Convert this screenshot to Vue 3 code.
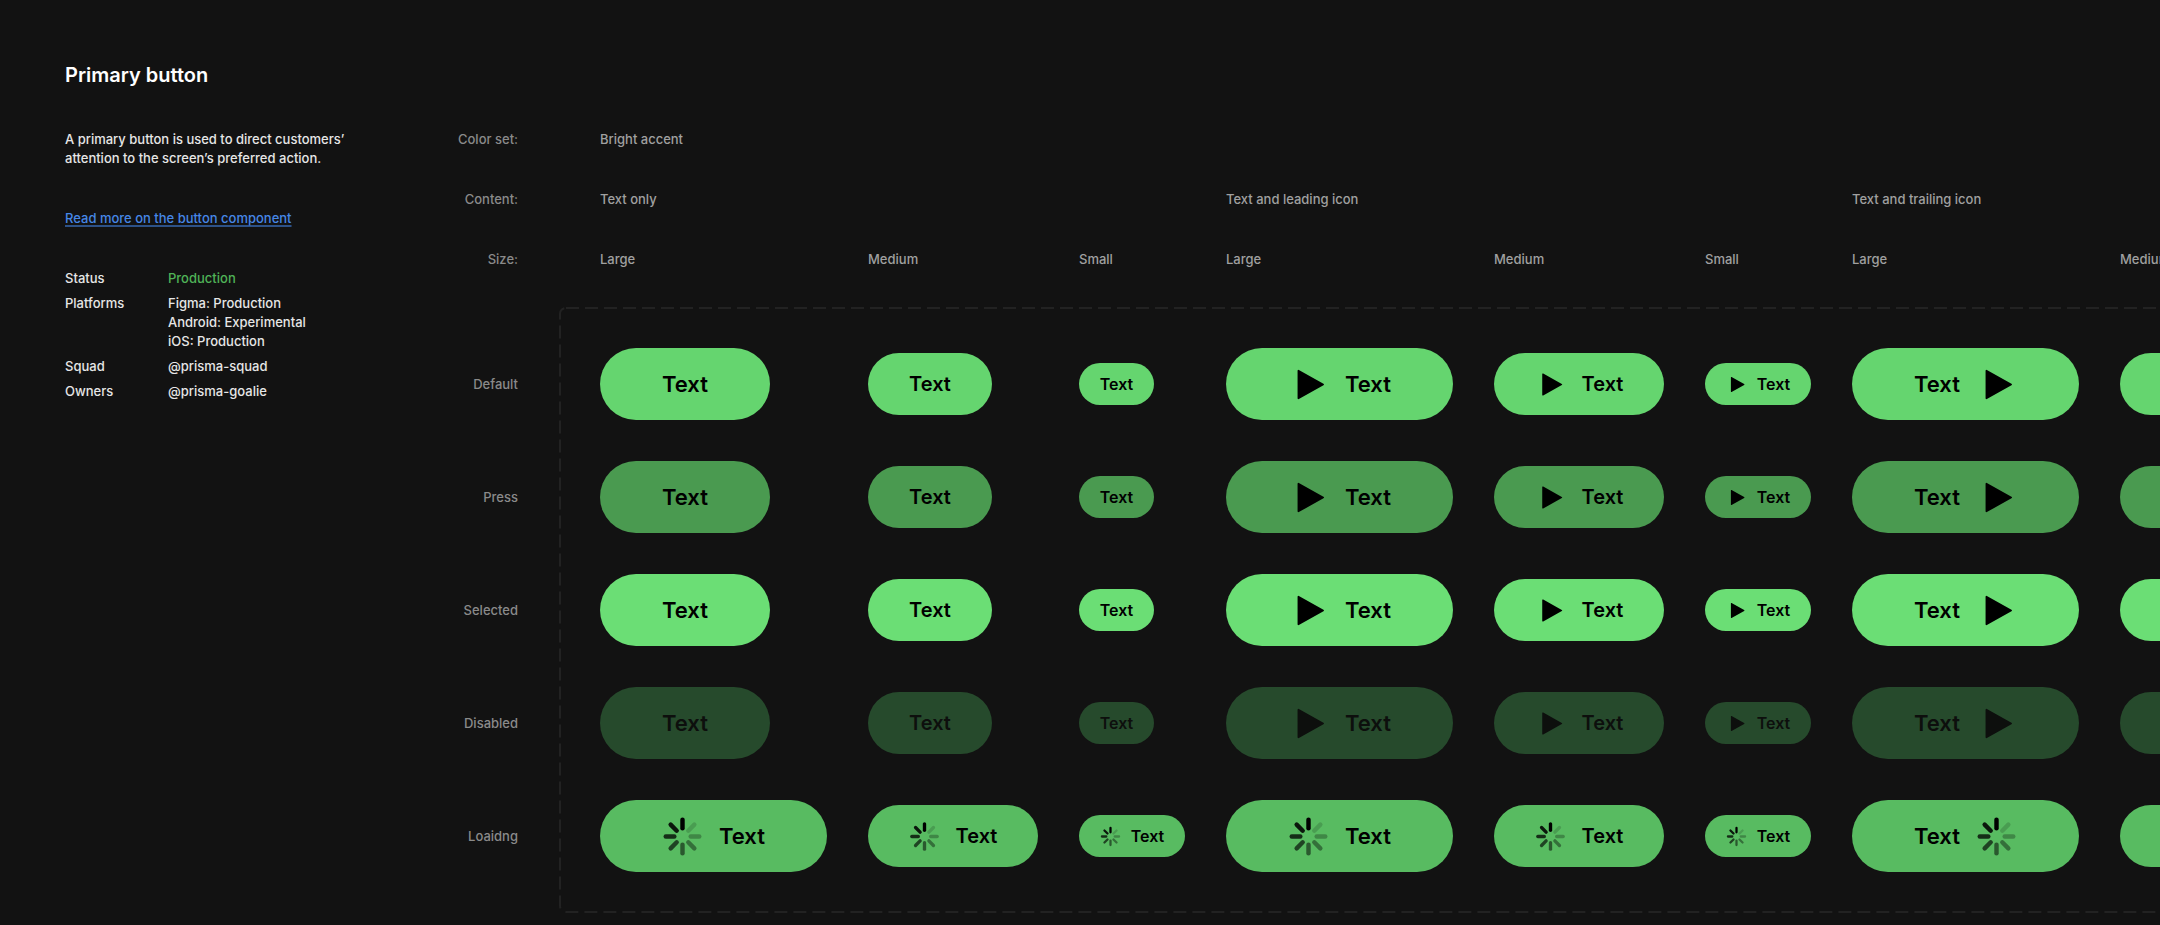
<template>
  <main class="page">
    <h1>Primary button</h1>

    <div class="layout">
      <!-- Component info -->
      <aside class="info">
        <p>A primary button is used to direct customers’<br>attention to the screen’s preferred action.</p>
        <a href="#" class="read-more">Read more on the button component</a>

        <dl class="meta">
          <template v-for="m in meta" :key="m.label">
            <dt>{{ m.label }}</dt>
            <dd :class="{ live: m.live }">
              <div v-for="v in m.values" :key="v">{{ v }}</div>
            </dd>
          </template>
        </dl>
      </aside>

      <!-- Row labels -->
      <div class="labels">
        <div class="head">
          <span>Color set:</span>
          <span>Content:</span>
          <span>Size:</span>
        </div>
        <div class="states">
          <span v-for="s in states" :key="s.name">{{ s.label }}</span>
        </div>
      </div>

      <!-- Variants -->
      <div class="canvas">
        <div class="head columns">
          <span class="full">Bright accent</span>
          <span v-for="c in contents" :key="c.name" class="group">{{ c.label }}</span>
          <template v-for="c in contents" :key="c.name">
            <span v-for="s in sizes" :key="s.name">{{ s.label }}</span>
          </template>
        </div>

        <div class="frame">
          <svg class="outline" aria-hidden="true">
            <rect x="1" y="1" rx="6" />
          </svg>
          <div class="variants columns">
            <template v-for="state in states" :key="state.name">
              <template v-for="content in contents" :key="content.name">
                <div v-for="size in sizes" :key="size.name" class="cell">
                  <button
                      type="button"
                      class="btn"
                      :class="[size.name, state.name, content.name, { 'has-icon': hasIcon(state, content) }]"
                      :disabled="state.name === 'disabled'"
                      :aria-busy="state.name === 'loading'"
                  >
                    <svg v-if="state.name === 'loading'" class="icon" viewBox="0 0 24 24" aria-hidden="true">
                      <line
                          v-for="(o, i) in spokes"
                          :key="i"
                          x1="12" y1="2.2" x2="12" y2="7.2"
                          :stroke-opacity="o"
                          :transform="`rotate(${i * 45} 12 12)`"
                      />
                    </svg>
                    <svg v-else-if="hasIcon(state, content)" class="icon" viewBox="0 0 24 24" aria-hidden="true">
                      <path d="M5.6 3.9a.5.5 0 0 1 .76-.43l14.4 8.1a.5.5 0 0 1 0 .86l-14.4 8.1a.5.5 0 0 1-.76-.43z" />
                    </svg>
                    <span>Text</span>
                  </button>
                </div>
              </template>
            </template>
          </div>
        </div>
      </div>
    </div>
  </main>
</template>

<script setup>
const meta = [
  {label: 'Status', values: ['Production'], live: true},
  {label: 'Platforms', values: ['Figma: Production', 'Android: Experimental', 'iOS: Production']},
  {label: 'Squad', values: ['@prisma-squad']},
  {label: 'Owners', values: ['@prisma-goalie']},
]

const states = [
  {name: 'default', label: 'Default'},
  {name: 'press', label: 'Press'},
  {name: 'selected', label: 'Selected'},
  {name: 'disabled', label: 'Disabled'},
  {name: 'loading', label: 'Loaidng'},
]

const contents = [
  {name: 'text-only', label: 'Text only'},
  {name: 'leading', label: 'Text and leading icon'},
  {name: 'trailing', label: 'Text and trailing icon'},
]

const sizes = [
  {name: 'large', label: 'Large'},
  {name: 'medium', label: 'Medium'},
  {name: 'small', label: 'Small'},
]

// opacity per spinner spoke, clockwise from the top
const spokes = [1, 0.16, 0.28, 0.4, 0.52, 0.64, 0.76, 0.88]

function hasIcon(state, content) {
  return state.name === 'loading' || content.name !== 'text-only'
}
</script>

<style>
body {
  margin: 0;
  background: #121212;
}
</style>

<style scoped>
.page {
  box-sizing: border-box;
  min-height: 100vh;
  overflow: hidden;
  padding: 60px 0 12px 65px;
  background: #121212;
  color: #e6e6e6;
  font-family: Inter, "Liberation Sans", sans-serif;
  font-size: 13px;
  font-weight: 500;
  line-height: 19px;
}

h1 {
  margin: 0 0 40px;
  color: #fff;
  font-size: 20px;
  font-weight: 600;
  line-height: 30px;
}

.layout {
  display: flex;
}

/* Info column */
.info {
  flex: none;
  width: 340px;
}

.info p {
  margin: 0 0 41px;
  white-space: nowrap;
}

.read-more {
  display: block;
  width: max-content;
  color: #4687e6;
  text-decoration-color: #2d5288;
  text-decoration-thickness: 2px;
  text-decoration-skip-ink: none;
  text-underline-offset: 2px;
}

.meta {
  display: grid;
  grid-template-columns: 97px auto;
  justify-content: start;
  column-gap: 6px;
  row-gap: 6px;
  margin: 41px 0 0;
}

.meta dd {
  margin: 0;
}

.meta .live {
  color: #4fb257;
}

/* Labels */
.labels {
  flex: none;
  width: 113px;
  margin-right: 41px;
  text-align: right;
  color: #8a8a8a;
}

.head {
  display: grid;
  row-gap: 41px;
  margin-bottom: 38px;
}

.states {
  display: grid;
  grid-auto-rows: 72px;
  align-items: center;
  row-gap: 41px;
  padding-top: 41px;
}

/* Variants */
.canvas {
  flex: none;
}

.columns {
  display: grid;
  grid-template-columns: repeat(3, 227px 170px 106px);
  column-gap: 41px;
  padding: 0 41px;
}

.canvas .head {
  color: #a0a0a0;
}

.full {
  grid-column: 1 / -1;
}

.group {
  grid-column: span 3;
}

.frame {
  position: relative;
}

.outline {
  position: absolute;
  top: 0;
  left: 0;
  width: 100%;
  height: 100%;
}

.outline rect {
  width: calc(100% - 2px);
  height: calc(100% - 2px);
  fill: none;
  stroke: #222;
  stroke-width: 2;
  stroke-dasharray: 13 6;
}

.variants {
  position: relative;
  grid-auto-rows: 72px;
  row-gap: 41px;
  padding: 41px;
}

.cell {
  display: flex;
  align-items: center;
}

/* Button */
.btn {
  display: flex;
  align-items: center;
  justify-content: center;
  gap: 16px;
  padding: 0;
  border: 0;
  border-radius: 36px;
  background: #65d56f;
  color: #000;
  font-family: inherit;
  font-weight: 600;
  cursor: pointer;
}

.large {
  width: 170px;
  height: 72px;
  font-size: 22px;
}

.large.has-icon {
  width: 227px;
}

.medium {
  width: 124px;
  height: 62px;
  font-size: 20px;
}

.medium.has-icon {
  width: 170px;
}

.small {
  gap: 10px;
  width: 75px;
  height: 42px;
  font-size: 16px;
}

.small.has-icon {
  width: 106px;
}

.trailing {
  flex-direction: row-reverse;
}

.press {
  background: #4a9a50;
}

.selected {
  background: #6bde75;
}

.disabled {
  background: #264a2c;
  color: #0d0f0d;
  cursor: default;
}

.loading {
  background: #58bb61;
}

.icon {
  flex: none;
  width: 41px;
  height: 41px;
  fill: currentColor;
}

.icon line {
  stroke: currentColor;
  stroke-width: 2.6;
  stroke-linecap: round;
}

.medium .icon {
  width: 31px;
  height: 31px;
}

.small .icon {
  width: 21px;
  height: 21px;
}
</style>
